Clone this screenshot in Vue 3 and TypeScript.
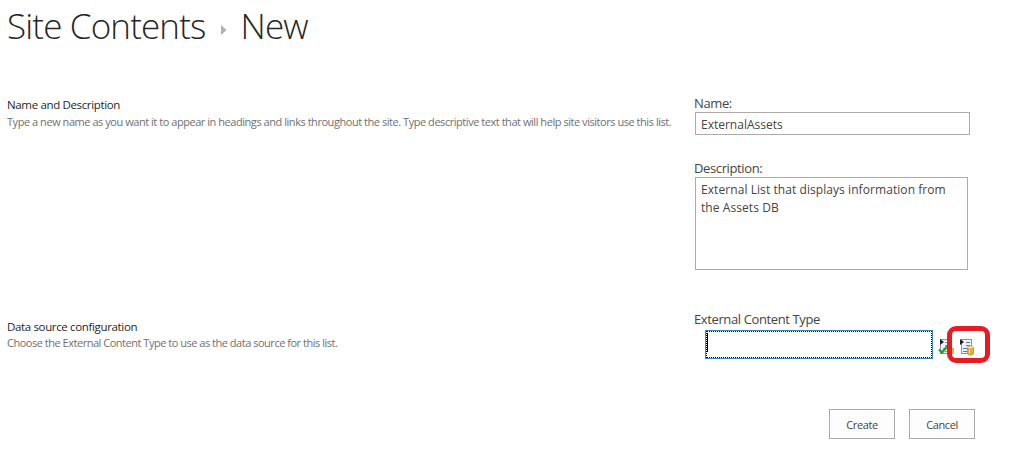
<template>
  <div class="page">
    <h1 class="title">
      <span>Site Contents</span>
      <svg class="arrow" width="6" height="10" viewBox="0 0 6 10"><path d="M0 0L5.5 5L0 10Z" fill="#b1b1b1" /></svg>
      <span class="current">New</span>
    </h1>

    <section class="row first">
      <div class="info">
        <h3>Name and Description</h3>
        <p class="hint-name">Type a new name as you want it to appear in headings and links throughout the site. Type descriptive text that will help site visitors use this list.</p>
      </div>
      <div class="fields">
        <label for="name">Name:</label>
        <input id="name" v-model="form.name" class="box" type="text">
        <label class="label-desc" for="desc">Description:</label>
        <textarea id="desc" v-model="form.description" class="box"></textarea>
      </div>
    </section>

    <section class="row second">
      <div class="info">
        <h3>Data source configuration</h3>
        <p>Choose the External Content Type to use as the data source for this list.</p>
      </div>
      <div class="fields">
        <label class="label-type">External Content Type</label>
        <div class="picker">
          <div class="editor"><span class="caret"></span></div>
          <svg class="icon" width="16" height="19" viewBox="0 0 16 19">
            <rect x="2.5" y="2.5" width="10" height="14" fill="#eef3fc" stroke="#7f93bb" />
            <path d="M7 5.5h4M7 8.5h4M5 11.5h6M7 14.5h4" stroke="#7d97c4" />
            <path d="M2 2l4 3l-4 3z" fill="#222" />
            <path d="M1 12.5l3 3L9.5 9" fill="none" stroke="#2b9a2b" stroke-width="2.4" />
            <path d="M11 11h5v6h-5z" fill="#dcae48" />
          </svg>
          <svg class="icon" width="16" height="19" viewBox="0 0 16 19">
            <rect x="2.5" y="2.5" width="10" height="14" fill="#eef3fc" stroke="#7f93bb" />
            <path d="M7 5.5h4M7 8.5h4M4 11.5h4M4 14.5h4" stroke="#5577b0" />
            <path d="M1 2l4 3l-4 3z" fill="#222" />
            <path d="M8.5 10.5v6c0 2 6 2 6 0v-6z" fill="#e0ad3c" stroke="#b98a35" stroke-width=".8" />
            <ellipse cx="11.5" cy="10.5" rx="3" ry="1.4" fill="#ffe9a6" stroke="#c99a3c" stroke-width=".7" />
            <path d="M10.5 12.5v4" stroke="#ffe793" />
          </svg>
          <span class="highlight"></span>
        </div>
      </div>
    </section>

    <div class="actions">
      <button type="button">Create</button>
      <button type="button">Cancel</button>
    </div>
  </div>
</template>

<script setup lang="ts">
import { reactive } from 'vue';

const form = reactive({
  name: 'ExternalAssets',
  description: 'External List that displays information from the Assets DB'
});
</script>

<style>
body {
  margin: 0;
  background: #fff;
}
</style>

<style scoped>
.page {
  width: 1016px;
  height: 474px;
  box-sizing: border-box;
  padding-left: 7px;
  overflow: hidden;
  color: #444;
  font: 12px/18px "Open Sans", "Noto Sans", sans-serif;
}

.title {
  display: flex;
  align-items: center;
  height: 52px;
  margin: 0;
  color: #262626;
  font-size: 35px;
  font-weight: 300;
  line-height: 52px;
  letter-spacing: -0.85px;
  white-space: nowrap;
}

.arrow {
  margin: 7px 14px 0 15px;
}

.row {
  display: flex;
}

.first {
  height: 222px;
  margin-top: 43px;
}

.second {
  height: 92px;
}

.info {
  width: 687px;
  flex: none;
}

h3 {
  margin: 1px 0 0;
  color: #262626;
  font-size: 11.5px;
  font-weight: 400;
  line-height: 18px;
  letter-spacing: -0.35px;
}

p {
  margin: -2px 0 0;
  color: #707070;
  font-size: 11px;
  line-height: 18px;
  letter-spacing: -0.48px;
  white-space: nowrap;
}

.hint-name {
  margin-top: -1px;
  letter-spacing: -0.455px;
}

.fields {
  display: flex;
  flex-direction: column;
  align-items: flex-start;
}

label {
  font-size: 13px;
  line-height: 17px;
  letter-spacing: -0.38px;
}

.box {
  box-sizing: border-box;
  margin: 0 0 0 1px;
  border: 1px solid #ababab;
  border-radius: 0;
  outline: 0;
  background: #fff;
  color: #444;
  font: 12px/18px "Open Sans", "Noto Sans", sans-serif;
}

input {
  width: 275px;
  height: 23px;
  padding: 3px 5px 1px;
}

.label-desc {
  margin-top: 25px;
}

textarea {
  width: 273px;
  height: 93px;
  padding: 3px 5px;
  letter-spacing: 0.07px;
  resize: none;
  overflow: hidden;
}

.label-type {
  margin-top: -6px;
}

.picker {
  display: flex;
  position: relative;
  margin: 2px 0 0 11px;
}

.editor {
  box-sizing: border-box;
  width: 228px;
  height: 29px;
  padding: 1px;
  border: 1px solid #3a8ab8;
  outline: 1px dotted #000;
  outline-offset: -2px;
}

.caret {
  display: block;
  width: 1px;
  height: 19px;
  margin-top: 1px;
  background: #000;
}

.icon {
  margin: 7px 0 0 5px;
}

/* red marker around the browse icon */
.highlight {
  position: absolute;
  left: 242px;
  top: -4px;
  width: 33px;
  height: 27px;
  border: 5px solid #e51c24;
  border-radius: 9px;
}

.actions {
  display: flex;
  gap: 14px;
  padding-left: 822px;
}

button {
  width: 66px;
  height: 30px;
  padding: 0;
  border: 1px solid #ababab;
  background: #fdfdfd;
  color: #444;
  font: 11px "Open Sans", "Noto Sans", sans-serif;
  letter-spacing: -0.4px;
}
</style>
